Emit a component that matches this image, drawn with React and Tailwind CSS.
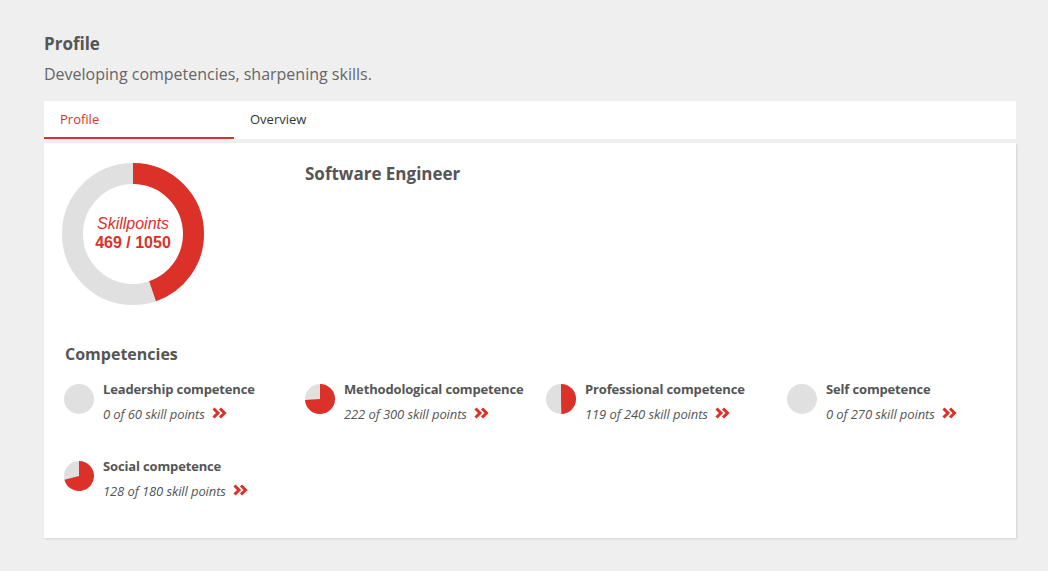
import { useState } from "react";

const RED = "#dc3129";
const GRAY = "#e0e0e0";

const competencies = [
  { name: "Leadership competence", points: 0, max: 60 },
  { name: "Methodological competence", points: 222, max: 300 },
  { name: "Professional competence", points: 119, max: 240 },
  { name: "Self competence", points: 0, max: 270 },
  { name: "Social competence", points: 128, max: 180 },
];

// small pie, starts at 12 o'clock and runs clockwise
const Pie = ({ value }) => {
  const r = 15;
  const a = value * 2 * Math.PI;
  const x = 15 + r * Math.sin(a);
  const y = 15 - r * Math.cos(a);
  const large = value > 0.5 ? 1 : 0;
  return (
    <svg width="30" height="30" viewBox="0 0 30 30" className="shrink-0">
      <circle cx="15" cy="15" r="15" fill={GRAY} />
      {value > 0 && (
        <path d={`M15 15 L15 0 A15 15 0 ${large} 1 ${x} ${y} Z`} fill={RED} />
      )}
    </svg>
  );
};

const Chevrons = () => (
  <svg width="15" height="12" viewBox="0 0 15 12" className="inline-block ml-[7px] -mt-[2px]">
    <path d="M1.5 1.5 L6 6 L1.5 10.5" fill="none" stroke={RED} strokeWidth="3" />
    <path d="M8 1.5 L12.5 6 L8 10.5" fill="none" stroke={RED} strokeWidth="3" />
  </svg>
);

const Donut = ({ points, max }) => {
  const r = 60.5;
  const c = 2 * Math.PI * r;
  const part = (points / max) * c;
  return (
    <div className="relative w-[142px] h-[142px] -ml-[2px]">
      <svg width="142" height="142" viewBox="0 0 142 142" className="-rotate-90">
        <circle cx="71" cy="71" r={r} fill="none" stroke={GRAY} strokeWidth="21" />
        <circle
          cx="71"
          cy="71"
          r={r}
          fill="none"
          stroke={RED}
          strokeWidth="21"
          strokeDasharray={`${part} ${c}`}
        />
      </svg>
      <div className="absolute inset-0 flex flex-col items-center justify-center font-['Liberation_Sans',Arial,sans-serif] text-[#dc3129] pb-[2px]">
        <span className="italic text-[16px] leading-[19px]">Skillpoints</span>
        <span className="font-bold text-[16px] leading-[19px]">
          {points} / {max}
        </span>
      </div>
    </div>
  );
};

export default function App() {
  const [tab, setTab] = useState(0);
  const total = competencies.reduce((s, c) => s + c.points, 0);
  const max = competencies.reduce((s, c) => s + c.max, 0);

  return (
    <div className="min-h-[571px] bg-[#efefef] px-[44px] pt-[32px] font-['Open_Sans',sans-serif] text-[#555]">
      <h1 className="text-[17px] leading-[24px] font-bold text-[#555]">Profile</h1>
      <p className="mt-[6px] text-[16px] leading-[24px] text-[#666]">
        Developing competencies, sharpening skills.
      </p>

      {/* tabs */}
      <div className="mt-[15px] w-[972px] h-[38px] bg-white flex">
        {["Profile", "Overview"].map((t, i) => (
          <button
            key={t}
            onClick={() => setTab(i)}
            className={
              "w-[190px] px-4 pt-[2px] text-left text-[13px] border-b-2 " +
              (tab === i ? "text-[#dc3129] border-[#dc3129]" : "text-[#333] border-transparent")
            }
          >
            {t}
          </button>
        ))}
      </div>

      {/* card */}
      <div className="mt-[4px] w-[972px] bg-white shadow-[1px_1px_2px_rgba(0,0,0,0.12)] px-5 pt-5 pb-[37px]">
        <div className="flex">
          <div className="w-[241px]">
            <Donut points={total} max={max} />
          </div>
          <h2 className="mt-[1px] text-[17px] leading-[20px] font-bold text-[#555]">
            Software Engineer
          </h2>
        </div>

        <h3 className="mt-[37px] ml-[1px] text-[16px] leading-[24px] font-bold text-[#555]">
          Competencies
        </h3>

        <div className="mt-[13px] grid grid-cols-[repeat(4,241px)] gap-y-[32px]">
          {competencies.map((c) => (
            <div key={c.name} className="flex gap-[9px]">
              <div className="mt-[5px]">
                <Pie value={c.points / c.max} />
              </div>
              <div>
                <div className="text-[13px] leading-[20px] font-bold tracking-[-0.15px] text-[#555]">{c.name}</div>
                <div className="mt-[5px] text-[13px] leading-[20px] italic tracking-[-0.1px] text-[#555] flex items-center">
                  {c.points} of {c.max} skill points
                  <Chevrons />
                </div>
              </div>
            </div>
          ))}
        </div>
      </div>
    </div>
  );
}
